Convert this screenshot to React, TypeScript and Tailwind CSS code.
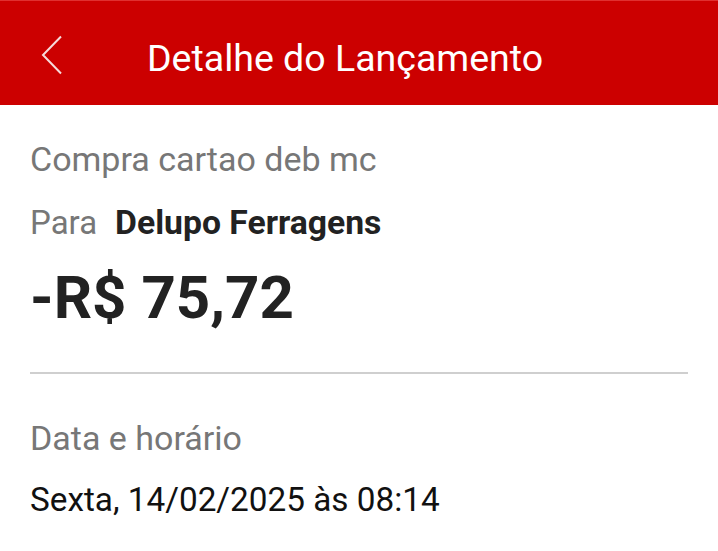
export default function App() {
  return (
    <div className="min-h-[551px] w-full bg-white font-['Roboto',sans-serif]">
      <header className="flex h-[105px] items-center bg-[#cc0000] border-t border-[#e03030]">
        <button className="ml-[33px] mt-[3px] text-[#f6dada]">
          <svg width="38" height="40" viewBox="0 0 38 40" fill="none" stroke="currentColor" strokeWidth="2">
            <path d="M28 1.5 L10 20 L28 38.5" />
          </svg>
        </button>
        <h1 className="ml-[76px] mt-[10px] text-[37.5px] font-normal text-white">Detalhe do Lançamento</h1>
      </header>

      <div className="px-[30px]">
        <p className="mt-[32px] text-[34px] leading-[44px] text-[#777]">Compra cartao deb mc</p>
        <p className="mt-[20px] flex items-baseline gap-[18px] leading-[44px]">
          <span className="text-[33px] text-[#777]">Para</span>
          <span className="text-[33.7px] font-bold text-[#222]">Delupo Ferragens</span>
        </p>
        <p className="mt-[18px] text-[60px] font-bold leading-[70px] text-[#222]">-R$ 75,72</p>
        <div className="mt-[39px] h-[2px] bg-[#cfcfcf]" />
        <p className="mt-[42px] text-[34px] leading-[44px] text-[#777]">Data e horário</p>
        <p className="mt-[18px] text-[33.3px] leading-[44px] text-[#111]">Sexta, 14/02/2025 às 08:14</p>
      </div>
    </div>
  );
}
